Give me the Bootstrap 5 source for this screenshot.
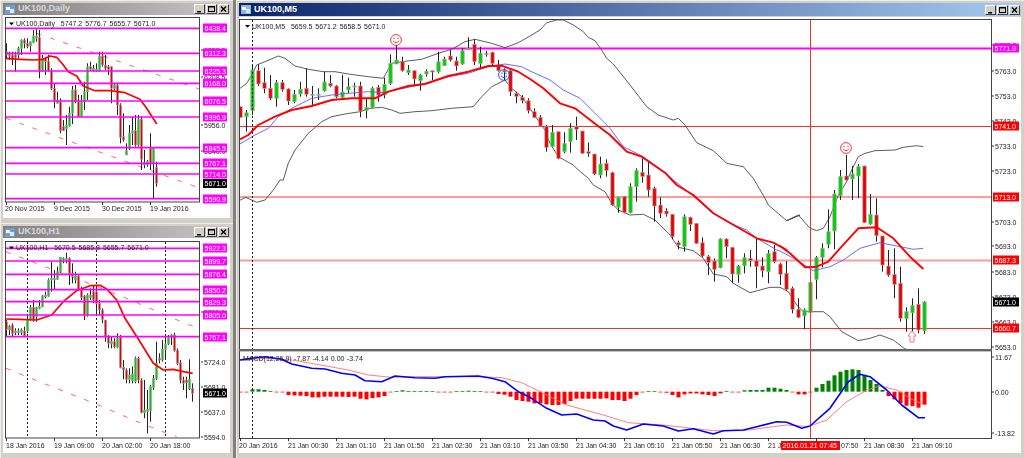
<!DOCTYPE html>
<html lang="en">
<head>
    <meta charset="UTF-8" />
    <meta name="viewport" content="width=device-width, initial-scale=1.0" />
    <title>UK100 charts</title>
    <link href="https://cdn.jsdelivr.net/npm/bootstrap@5.3.3/dist/css/bootstrap.min.css" rel="stylesheet" />
    <style>
        html, body { height: 458px; overflow: hidden; }
        body { background: #808080; font-family: "Liberation Sans", Arial, sans-serif; }
        .mdi-desk { height: 458px; gap: 3px; }
        .mdi-side { width: 233px; flex: none; }
        .mdi-win { background: #d4d0c8; padding: 2px 3px 5px 2px; min-height: 0; border-top: 1px solid #eee; border-left: 1px solid #eee; }
        .mdi-win-top { height: 223px; flex: none; }
        .mdi-win-low { flex: 1 1 0; }
        .mdi-title { height: 12px; flex: none; padding: 0 1px 0 2px; font-size: 9px; font-weight: 700; color: #d8d8d8; background: linear-gradient(90deg, #808080, #c8c8c8); }
        .mdi-active .mdi-title { height: 13px; margin-bottom: 1px; color: #fff; background: linear-gradient(90deg, #0a246a, #a6caf0); }
        .mdi-ico { width: 10px; height: 9px; flex: none; margin-right: 3px; }
        .mdi-cap { width: 11px; height: 10px; padding: 0; margin-left: 1px; border-radius: 0; background: #d4d0c8; border: 1px solid; border-color: #fff #404040 #404040 #fff; display: flex; }
        .mdi-cap svg { width: 100%; height: 100%; }
        .mdi-plot { flex: 1 1 0; min-height: 0; background: #fff; display: block; width: 100%; filter: blur(0.35px); }
        .mdi-plot text { font-family: "Liberation Sans", Arial, sans-serif; font-size: 7px; fill: #1c1c1c; }
    </style>
</head>
<body>

<div class="d-flex mdi-desk">
    <div class="d-flex flex-column mdi-side">
        <div class="d-flex flex-column mdi-win mdi-win-top">
            <div class="d-flex align-items-center mdi-title">
                <svg class="mdi-ico" viewBox="0 0 10 9"><rect width="10" height="9" fill="#6f9bd8"/><rect x="1" y="2" width="4" height="3" fill="#fff"/><rect x="5" y="4" width="4" height="4" fill="#dce8f8"/></svg>
                <span>UK100,Daily</span>
                <div class="d-flex ms-auto">
                    <button class="mdi-cap"><svg viewBox="0 0 9 8"><rect x="2" y="6" width="4" height="1.5" fill="#000"/></svg></button>
                    <button class="mdi-cap"><svg viewBox="0 0 9 8"><rect x="1.5" y="1.5" width="6" height="5" fill="none" stroke="#000"/><rect x="1" y="1" width="7" height="1.5"/></svg></button>
                    <button class="mdi-cap"><svg viewBox="0 0 9 8"><path d="M2 1.5l5 5M7 1.5l-5 5" stroke="#000" stroke-width="1.3"/></svg></button>
                </div>
            </div>
            <svg class="mdi-plot" id="plotDaily"></svg>
        </div>
        <div class="d-flex flex-column mdi-win mdi-win-low">
            <div class="d-flex align-items-center mdi-title">
                <svg class="mdi-ico" viewBox="0 0 10 9"><rect width="10" height="9" fill="#6f9bd8"/><rect x="1" y="2" width="4" height="3" fill="#fff"/><rect x="5" y="4" width="4" height="4" fill="#dce8f8"/></svg>
                <span>UK100,H1</span>
                <div class="d-flex ms-auto">
                    <button class="mdi-cap"><svg viewBox="0 0 9 8"><rect x="2" y="6" width="4" height="1.5" fill="#000"/></svg></button>
                    <button class="mdi-cap"><svg viewBox="0 0 9 8"><rect x="1.5" y="1.5" width="6" height="5" fill="none" stroke="#000"/><rect x="1" y="1" width="7" height="1.5"/></svg></button>
                    <button class="mdi-cap"><svg viewBox="0 0 9 8"><path d="M2 1.5l5 5M7 1.5l-5 5" stroke="#000" stroke-width="1.3"/></svg></button>
                </div>
            </div>
            <svg class="mdi-plot" id="plotH1"></svg>
        </div>
    </div>
    <div class="d-flex flex-column flex-grow-1 mdi-win mdi-active">
        <div class="d-flex align-items-center mdi-title">
            <svg class="mdi-ico" viewBox="0 0 10 9"><rect width="10" height="9" fill="#8fb4e8"/><rect x="1" y="2" width="4" height="3" fill="#fff"/><rect x="5" y="4" width="4" height="4" fill="#dce8f8"/></svg>
            <span>UK100,M5</span>
            <div class="d-flex ms-auto">
                <button class="mdi-cap"><svg viewBox="0 0 9 8"><rect x="2" y="6" width="4" height="1.5" fill="#000"/></svg></button>
                <button class="mdi-cap"><svg viewBox="0 0 9 8"><rect x="1.5" y="1.5" width="6" height="5" fill="none" stroke="#000"/><rect x="1" y="1" width="7" height="1.5"/></svg></button>
                <button class="mdi-cap"><svg viewBox="0 0 9 8"><path d="M2 1.5l5 5M7 1.5l-5 5" stroke="#000" stroke-width="1.3"/></svg></button>
            </div>
        </div>
        <svg class="mdi-plot" id="plotM5"></svg>
    </div>
</div>

<script src="https://cdn.jsdelivr.net/npm/bootstrap@5.3.3/dist/js/bootstrap.bundle.min.js"></script>
<script>
    const MAGENTA = "#ff00ff", RED = "#ff0000";

    // all chart data was read off zoomed crops, so coords are "3x" values
    function poly(baseX, baseY, pts) {
        const out = [];
        for (let i = 0; i < pts.length; i += 2) {
            out.push((baseX + pts[i] / 3).toFixed(1) + "," + (baseY + pts[i + 1] / 3).toFixed(1));
        }
        return out.join(" ");
    }

    function line(points, color, width, dash) {
        return `<polyline points="${points}" fill="none" stroke="${color}" stroke-width="${width}" stroke-linejoin="round"${dash ? ` stroke-dasharray="${dash}"` : ""}/>`;
    }

    function hLine(x1, x2, y, color, width) {
        return `<line x1="${x1}" x2="${x2}" y1="${y}" y2="${y}" stroke="${color}" stroke-width="${width}"/>`;
    }

    function vLine(x, y1, y2, color, width, dash) {
        return `<line x1="${x}" x2="${x}" y1="${y1}" y2="${y2}" stroke="${color}" stroke-width="${width}"${dash ? ` stroke-dasharray="${dash}"` : ""}/>`;
    }

    function candle(x, top, bot, hi, lo, up, w) {
        const cx = Math.round(x) + 0.5;
        const h = Math.max(bot - top, 1);
        return vLine(cx, hi.toFixed(1), lo.toFixed(1), "#222", 1) +
            `<rect x="${cx - w / 2}" y="${top.toFixed(1)}" width="${w}" height="${h.toFixed(1)}" fill="${up ? "#00d000" : "#e80000"}" stroke="#a8a8a8" stroke-width="0.7"/>`;
    }

    function tag(x, y, text, bg, w) {
        return `<rect x="${x}" y="${y - 4.5}" width="${w}" height="9" fill="${bg}"/>` +
            `<text x="${x + 1.5}" y="${y + 2.5}" style="fill:#fff">${text}</text>`;
    }

    function plain(x, y, text) {
        return `<line x1="${x - 3}" x2="${x - 1}" y1="${y}" y2="${y}" stroke="#333"/><text x="${x}" y="${y + 2.5}">${text}</text>`;
    }

    function smiley(x, y, color) {
        return `<g fill="none" stroke="${color}" stroke-width="1"><circle cx="${x}" cy="${y}" r="5.4"/>` +
            `<path d="M${x - 3} ${y + 0.8}q3 3.6 6 0"/><path d="M${x - 2} ${y - 2.4}v1.6M${x + 2} ${y - 2.4}v1.6"/></g>`;
    }

    function setupPlot(id) {
        const svg = document.getElementById(id);
        const r = svg.getBoundingClientRect();
        svg.setAttribute("viewBox", `${r.left} ${r.top} ${r.width} ${r.height}`);
        return svg;
    }

    function header(x, y, text) {
        return `<path d="M${x} ${y - 3.5}h5l-2.5 2.8z" fill="#000"/><text x="${x + 7}" y="${y}" style="word-spacing:1px">${text}</text>`;
    }

    /* ---------- M5 ---------- */
    const m5Candles = [
        [320,352,320,352,0],[338,350,330,395,1],[210,332,195,345,1],[212,252,193,258,0],[248,265,203,280,0],
        [265,295,225,300,0],[248,295,240,320,1],[248,268,240,275,0],[267,303,265,315,0],[283,305,270,310,1],
        [268,282,245,290,1],[265,283,205,290,0],[283,285,258,318,0],[283,285,265,300,1],[246,272,215,275,1],
        [250,258,225,262,0],[258,290,255,295,0],[276,292,224,295,1],[260,270,233,280,1],[258,260,248,290,1],
        [258,333,245,352,0],[322,332,295,355,1],[265,322,260,325,1],[262,285,255,305,0],[253,285,233,295,1],
        [190,250,163,255,1],[180,192,135,192,1],[185,212,170,215,0],[210,218,195,225,1],[212,237,212,255,0],
        [225,242,222,272,1],[214,222,208,230,1],[212,216,212,240,0],[185,215,155,220,1],[177,197,170,198,1],
        [168,180,150,185,0],[183,198,170,212,0],[152,192,145,195,1],[145,147,112,150,0],[133,185,118,195,0],
        [160,190,140,205,1],[160,162,152,170,0],[157,190,155,195,0],[195,212,180,215,0],[212,216,205,240,0],
        [212,275,205,288,0],[280,290,275,310,0],[292,302,285,310,0],[302,332,295,340,0],[335,352,325,355,0],
        [352,378,345,380,0],[380,442,375,455,0],[397,440,375,442,1],[395,475,395,478,0],[430,455,397,460,1],
        [385,425,370,458,1],[380,388,350,420,0],[393,460,393,462,0],[455,460,428,470,0],[462,522,462,525,0],
        [492,525,470,535,1],[490,512,478,530,0],[518,615,515,618,0],[592,622,590,638,1],[590,637,588,640,0],
        [560,638,550,640,1],[512,560,505,605,1],[517,530,475,548,0],[525,570,485,590,0],[565,618,560,665,0],
        [615,640,592,655,0],[633,642,625,650,0],[643,710,643,718,0],[728,735,722,748,0],[650,740,643,755,1],
        [652,673,650,693,0],[670,730,670,732,0],[728,768,712,772,0],[770,787,765,825,0],[783,808,775,845,0],
        [717,803,715,805,1],[717,740,715,775,0],[742,822,742,850,0],[798,823,795,848,1],[773,797,760,820,1],
        [775,782,750,800,0],[782,800,715,865,0],[798,812,772,832,0],[760,815,750,850,1],[755,785,735,790,0],
        [792,823,788,855,0],[820,868,783,872,0],[865,928,860,940,0],[928,952,895,955,0],[930,948,925,988,1],
        [847,938,847,940,1],[773,838,768,898,1],[745,773,730,802,1],[695,733,628,745,1],[582,693,570,748,1],
        [530,587,510,600,1],[528,540,465,542,0],[522,537,498,600,1],[500,528,492,595,1],[498,668,498,668,0],
        [643,672,582,675,1],[645,707,595,725,0],[708,795,708,815,0],[798,825,750,830,0],[823,853,745,895,0],
        [850,955,800,965,0],[935,955,922,995,1],[917,938,895,995,1],[913,990,865,1000,0],[906,992,903,1002,1]
    ];

    // histogram tops per bar, baseline is 155
    const m5Hist = [
        157,157,148,148,150,153,157,157,165,166,167,168,172,172,170,170,170,170,171,170,176,178,174,172,168,157,
        153,151,153,153,153,153,153,157,157,157,153,153,152,153,153,157,157,162,164,170,180,183,185,190,
        190,193,195,195,192,183,176,176,176,176,176,175,180,180,183,176,165,157,153,153,157,158,165,172,163,160,
        160,163,165,168,160,153,157,157,151,150,150,150,143,143,146,150,157,163,163,157,
        143,132,122,106,95,90,88,90,105,120,132,150,168,178,190,197,198,203,194
    ];

    const svgM5 = setupPlot("plotM5");
    let m5 = "";

    const upper = [
        poly(235, 0, [15,265,35,250,50,225,65,195,90,185,130,168,150,175,180,198,220,208,265,215,300,215,340,222,400,230,445,235,470,190,500,185,560,178,610,160,650,148,690,125,720,118,770,130,810,143,850,128,885,108]),
        poly(530, 0, [30,90,50,68,80,60,100,60,130,75,160,95,175,112,195,122,215,150,230,175,250,192,300,255,350,320,385,345,430,360,445,355,465,375,500,428,550,452,590,490,640,500,670,535]),
        poly(530, 170, [705,85,715,105,770,152,810,135]),
        poly(780, 170, [20,152,55,135,90,175,110,182,130,175,150,140,175,75,200,35]),
        poly(780, 0, [215,510,235,470,255,460,285,452,345,450,370,442,410,437,430,440])
    ].join(" ");
    const lower = [
        poly(235, 170, [12,92,32,82,65,97,90,90,115,60,135,30]),
        poly(235, 0, [145,540,160,490,180,450,220,400,260,365,290,350,330,342,375,335,405,325,440,322,470,330,495,340,540,335,590,332,650,325,715,320,740,290,770,260,810,240,830,265,860,290]),
        poly(530, 0, [0,325,10,340,30,370,45,390,60,430,85,470,130,495]),
        poly(530, 170, [145,0,175,25,190,45,225,65,245,100,265,120,300,135,340,133,375,150,420,195,445,232,490,242,520,265,550,312,590,320,610,340,660,368,720,352,750,352,775,365]),
        poly(780, 170, [50,405,70,425,100,425,130,425,150,440,185,485,235,512,270,505,300,495,340,510,375,537,400,540])
    ].join(" ");
    const maBlue = [
        poly(235, 0, [15,432,60,405,100,385,130,350,170,325,230,295,290,285,340,280,400,275,450,278,490,268,540,258,590,245,640,230,700,220,760,200,810,192,860,200]),
        poly(530, 0, [0,213,60,240,100,270,150,295,200,345,240,385,280,440,340,470,405,518]),
        poly(530, 170, [430,30,490,78,550,130,600,160,650,180,680,205,740,240]),
        poly(780, 170, [0,243,50,270,100,302,150,290,190,270,240,235,300,218,350,228,400,238,430,235])
    ].join(" ");
    const maRed = [
        poly(235, 0, [15,418,40,405,70,375,120,350,170,330,230,318,290,300,350,295,420,295,460,275,520,258,570,252,640,228,700,215,760,198,800,197,850,215]),
        poly(530, 0, [0,237,40,265,90,310,135,325,200,375,240,405,290,455,335,470,405,518]),
        poly(530, 170, [440,45,490,75,550,130,620,170,680,205,730,218,770,240]),
        poly(780, 170, [0,228,30,250,75,292,110,290,145,275,180,235,235,175,290,172,340,205,390,260,430,297])
    ].join(" ");

    m5 += hLine(240, 991, 48.5, MAGENTA, 1.8);
    m5 += hLine(240, 991, 126.5, "#ff2a2a", 1);
    m5 += hLine(240, 991, 197, "#ff9a9a", 2);
    m5 += hLine(240, 991, 260.5, "#ff9a9a", 2);
    m5 += hLine(240, 991, 328.5, "#ff2a2a", 1);
    m5 += line(upper, "#4a4a4a", 0.9) + line(lower, "#4a4a4a", 0.9);

    m5Candles.forEach((c, i) => {
        m5 += candle(240 + 6 * i, c[0] / 3, c[1] / 3, c[2] / 3, c[3] / 3, c[4], 3.4);
    });

    m5 += line(maBlue, "#5a5aff", 0.9);
    m5 += line(maRed, RED, 1.9);
    m5 += vLine(252.5, 20, 438, "#222", 1, "2 2");
    m5 += vLine(810.5, 20, 438, "#ff2a2a", 1);
    m5 += smiley(396, 40, "#f03a3a") + smiley(504, 75, "#2a4cf0") + smiley(846, 148, "#f03a3a");
    m5 += `<polygon points="912,331 916,336 914,336 914,342 910,342 910,336 908,336" fill="#fff" stroke="#f66" stroke-width="0.9"/>`;
    m5 += header(245, 28.5, "UK100,M5 &nbsp;5659.5 5671.2 5658.5 5671.0");

    // MACD pane
    const zero = 340 + 155 / 3;
    m5Hist.forEach((z, i) => {
        const y = 340 + z / 3;
        const x = 240 + 6 * i - 1.5;
        if (z > 155) {
            m5 += `<rect x="${x}" y="${zero.toFixed(1)}" width="4" height="${(y - zero).toFixed(1)}" fill="${RED}"/>`;
        } else {
            m5 += `<rect x="${x}" y="${y.toFixed(1)}" width="4" height="${(zero - y).toFixed(1)}" fill="#008000"/>`;
        }
    });
    m5 += line([
        poly(235, 340, [15,60,100,55,170,60,240,72,340,90,400,105,470,112,540,110,730,110,800,113,860,128]),
        poly(530, 340, [0,140,110,195,220,225,295,248,400,255,550,272,640,272,730,260,770,255,840,260]),
        poly(780, 340, [90,258,140,240,200,185,260,150,300,138,350,150,400,180,435,195])
    ].join(" "), "#ff7070", 0.9);
    m5 += line([
        poly(235, 340, [15,60,50,55,90,50,140,58,170,72,230,85,270,87,320,100,360,105,390,122,440,125,480,108,540,113,600,115,630,110,730,108,770,115,810,125,850,155]),
        poly(530, 340, [0,172,50,205,95,225,140,222,190,240,225,243,250,258,290,270,340,252,400,258,445,273,490,266,550,282,580,272,640,270,680,260,740,245,770,247,815,265]),
        poly(780, 340, [90,258,150,205,205,125,240,103,270,110,320,150,365,195,415,233,435,233])
    ].join(" "), "#0000ff", 1.6);
    m5 += `<text x="243" y="361" style="word-spacing:.5px">MACD(12,26,9) -7.87 -4.14 0.00 -3.74</text>`;

    // frame, divider, scales
    m5 += `<rect x="239.5" y="19.5" width="752" height="419" fill="none" stroke="#444"/>`;
    m5 += `<rect x="239" y="349" width="753" height="2.4" fill="#666"/>`;
    [[45,"5773.0"],[71,"5763.0"],[96,"5753.0"],[121,"5743.0"],[146,"5733.0"],[171,"5723.0"],[222,"5703.0"],[246,"5693.0"],
        [272,"5683.0"],[297,"5673.0"],[322,"5663.0"],[347,"5653.0"],[357,"11.67"],[392,"0.00"],[433,"-13.82"]].forEach(l => {
        m5 += plain(995, l[0], l[1]);
    });
    m5 += tag(993, 48, "5771.9", MAGENTA, 26) + tag(993, 126, "5741.0", RED, 26) + tag(993, 197, "5713.0", RED, 26);
    m5 += tag(993, 260, "5687.3", RED, 26) + tag(993, 302, "5671.0", "#000", 26) + tag(993, 328, "5660.7", RED, 26);

    // the crosshair date box covers most of the 07:10 label, only "21 J" shows
    const m5Times = ["21 Jan 00:30","21 Jan 01:10","21 Jan 01:50","21 Jan 02:30","21 Jan 03:10","21 Jan 03:50","21 Jan 04:30","21 Jan 05:10","21 Jan 05:50","21 Jan 06:30","21 J"];
    m5 += vLine(240.5, 438, 441, "#333", 1) + `<text x="239" y="448">20 Jan 2016</text>`;
    m5Times.forEach((t, i) => {
        const x = 288 + 48 * i;
        m5 += vLine(x + 0.5, 438, 441, "#333", 1) + `<text x="${x}" y="448">${t}</text>`;
    });
    m5 += vLine(816.5, 438, 441, "#333", 1) + `<text x="841" y="448">07:50</text>`;
    m5 += vLine(864.5, 438, 441, "#333", 1) + `<text x="864" y="448">21 Jan 08:30</text>`;
    m5 += vLine(912.5, 438, 441, "#333", 1) + `<text x="912" y="448">21 Jan 09:10</text>`;
    m5 += `<rect x="781" y="441" width="59" height="9" fill="${RED}"/><text x="782.5" y="448" style="fill:#fff">2016.01.21 07:45</text>`;
    svgM5.innerHTML = m5;

    /* ---------- Daily ---------- */
    const dailyCandles = [
        [18,155,165,130,175,0],[27,160,168,155,180,1],[36,165,178,155,195,0],[45,165,172,155,215,0],[54,145,165,140,175,1],
        [63,120,145,118,165,1],[72,120,130,115,145,0],[81,130,140,115,145,0],[90,125,138,125,155,1],[99,108,128,90,130,1],
        [108,108,115,88,125,1],[117,113,212,90,235,0],[126,175,212,165,215,1],[135,175,185,172,225,0],[144,183,212,165,215,0],
        [153,212,265,205,270,0],[162,265,302,250,325,0],[171,300,310,275,310,1],[180,305,392,295,400,0],[189,380,392,360,392,0],
        [198,375,385,345,435,1],[207,340,378,320,380,1],[216,270,340,258,372,1],[225,270,305,255,310,0],[234,305,350,285,350,0],
        [243,305,350,285,350,1],[252,275,305,245,330,1],[261,200,275,190,300,1],[270,200,208,185,212,0],[279,205,212,195,215,1],
        [288,208,212,190,215,1],[297,168,212,155,215,1],[306,168,195,155,200,0],[315,195,205,165,210,0],[324,200,208,195,225,0],
        [333,200,265,200,310,0],[342,255,265,250,270,1],[351,255,315,250,345,0],[360,315,412,310,430,0],[369,410,420,340,425,0],
        [378,452,465,430,465,1],[387,400,445,375,450,1],[396,392,400,350,435,1],[405,392,435,345,440,0],[414,358,435,345,440,1],
        [423,358,478,350,510,0],[432,488,495,450,505,1],[441,485,495,480,500,1],[450,445,492,400,510,0],[459,445,490,445,595,1],
        [468,502,550,485,560,0]
    ];
    const svgD = setupPlot("plotDaily");
    let d = "";
    d += line(poly(0, 0, [110,100,600,268]), "#ff7878", 1.1, "5 9");
    d += line(poly(0, 0, [18,355,600,565]), "#ff7878", 1.1, "5 9");
    dailyCandles.forEach(c => {
        d += candle(c[0] / 3, c[1] / 3, c[2] / 3, c[3] / 3, c[4] / 3, c[5], 2.2);
    });
    d += line(poly(0, 0, [18,175,60,178,100,180,130,178,150,168,170,172,190,195,205,215,230,228,250,258,285,272,330,272,375,278,420,298,440,325,470,372]), RED, 1.7);
    [[85,"6438.4"],[160,"6312.3"],[213,"6225.3"],[250,"6168.0"],[303,"6076.5"],[351,"5996.9"],[443,"5845.5"],[490,"5767.1"],[522,"5714.0"],[596,"5590.9"]].forEach(l => {
        d += hLine(6, 200, (l[0] / 3).toFixed(1), MAGENTA, 1.7);
    });
    d += `<rect x="5.5" y="17.5" width="194" height="184.5" fill="none" stroke="#444"/>`;
    d += header(9, 26, "UK100,Daily &nbsp;5747.2 5776.7 5655.7 5671.0");
    [[50,"6320.0"],[77,"6208.5"],[125,"5956.0"],[151,"5840.0"]].forEach(l => { d += plain(204, l[0], l[1]); });
    [[85,"6438.4"],[160,"6312.3"],[213,"6225.3"],[250,"6168.0"],[303,"6076.5"],[351,"5996.9"],[443,"5845.5"],[490,"5767.1"],[522,"5714.0"],[596,"5590.9"]].forEach(l => {
        d += tag(203, Math.round(l[0] / 3), l[1], MAGENTA, 24);
    });
    d += tag(203, 183.5, "5671.0", "#000", 24);
    [[5,"20 Nov 2015",6],[54,"9 Dec 2015",54],[102,"30 Dec 2015",102],[150,"19 Jan 2016",150]].forEach(l => {
        d += vLine(l[2] + 0.5, 202, 205, "#333", 1) + `<text x="${l[0]}" y="211">${l[1]}</text>`;
    });
    svgD.innerHTML = d;

    /* ---------- H1 ---------- */
    const h1Candles = [
        [18,305,328,300,350,0],[27,318,330,315,345,1],[36,315,340,310,352,0],[45,333,338,325,345,1],[54,333,338,325,345,1],
        [63,330,337,325,345,1],[72,333,347,320,348,0],[81,300,333,285,340,1],[90,262,298,255,302,1],[99,262,300,240,305,0],
        [108,262,290,260,305,1],[117,260,265,240,268,1],[126,228,260,225,262,1],[135,225,230,215,235,1],[144,180,228,175,230,1],
        [153,175,180,125,215,1],[162,175,180,150,210,1],[171,155,178,140,180,1],[180,112,155,112,158,1],[189,115,122,112,130,1],
        [198,115,120,98,130,1],[207,115,160,112,195,0],[216,160,170,130,190,0],[225,168,180,155,190,1],[234,168,210,165,210,0],
        [243,210,232,200,240,0],[252,228,285,225,300,0],[261,225,285,220,290,1],[270,225,232,205,240,1],[279,215,240,195,250,0],
        [288,215,250,195,285,0],[297,250,270,240,285,0],[306,270,298,265,310,0],[315,300,350,300,365,0],[324,348,370,345,385,0],
        [333,365,372,350,385,1],[342,365,380,355,385,0],[351,355,382,340,385,1],[360,352,442,345,445,0],[369,442,450,420,478,0],
        [378,450,478,445,490,0],[387,465,478,445,490,1],[396,462,482,440,490,1],[405,415,485,410,490,1],[414,415,480,410,490,0],
        [423,480,578,475,580,0],[432,570,578,480,595,1],[441,568,575,510,640,1],[450,500,572,495,605,1],[459,475,503,465,510,1],
        [468,430,475,365,480,1],[477,415,420,400,430,0],[486,388,420,360,425,1],[495,372,388,350,420,1],[504,352,372,345,375,1],
        [513,345,350,342,375,1],[522,345,392,338,395,0],[531,390,430,385,435,0],[540,428,480,420,490,0],[549,480,490,470,510,0],
        [558,480,488,470,535,0],[567,478,505,418,510,1],[576,505,520,490,545,0]
    ];
    const svgH = setupPlot("plotH1");
    let h = "";
    h += line(poly(0, 220, [18,95,240,180,380,235,450,265,560,312,600,325]), "#ff7878", 1.1, "5 9");
    h += line(poly(0, 220, [18,445,75,468,290,553,400,600,500,640,530,650]), "#ff7878", 1.1, "5 9");
    [82, 289, 496].forEach(z => { h += vLine(Math.round(z / 3) + 0.5, 242, 438, "#222", 1, "2 2"); });
    h1Candles.forEach(c => {
        h += candle(c[0] / 3, 220 + c[1] / 3, 220 + c[2] / 3, 220 + c[3] / 3, 220 + c[4] / 3, c[5], 2.2);
    });
    h += line(poly(0, 220, [18,297,60,298,110,300,155,285,190,245,230,212,270,197,300,196,320,207,350,240,375,295,420,365,460,430,490,450,520,448,550,455,578,460]), RED, 1.7);
    const h1Levels = [[85,"5922.3"],[123,"5899.7"],[163,"5876.4"],[209,"5850.2"],[245,"5829.3"],[285,"5805.0"],[350,"5767.1"]];
    h1Levels.forEach(l => { h += hLine(6, 200, (220 + l[0] / 3).toFixed(1), MAGENTA, 1.7); });
    h += `<rect x="5.5" y="241.5" width="194" height="196.5" fill="none" stroke="#444"/>`;
    h += header(9, 250, "UK100,H1 &nbsp;5670.5 5685.3 5655.7 5671.0");
    [[275,"5811.0"],[427,"5724.0"],[500,"5681.0"],[575,"5637.0"],[650,"5594.0"]].forEach(l => {
        h += plain(204, Math.round(220 + l[0] / 3), l[1]);
    });
    h1Levels.forEach(l => { h += tag(203, Math.round(220 + l[0] / 3), l[1], MAGENTA, 24); });
    h += tag(203, 393, "5671.0", "#000", 24);
    [[6,"18 Jan 2016",6],[54,"19 Jan 09:00",54],[102,"20 Jan 02:00",102],[150,"20 Jan 18:00",150]].forEach(l => {
        h += vLine(l[2] + 0.5, 438, 441, "#333", 1) + `<text x="${l[0]}" y="448">${l[1]}</text>`;
    });
    svgH.innerHTML = h;
</script>

</body>
</html>
